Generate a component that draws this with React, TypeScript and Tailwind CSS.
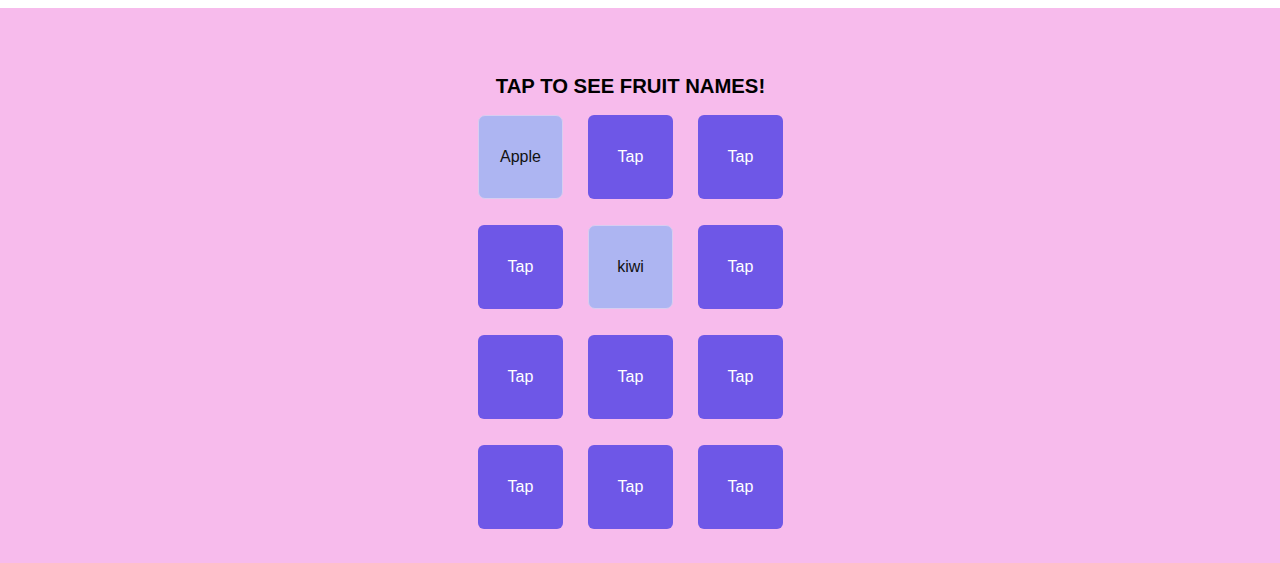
import { useState } from 'react';

const fruits = [
  'Apple', 'Banana', 'Cherry',
  'Grape', 'kiwi', 'Mango',
  'Orange', 'Pear', 'Plum',
  'Peach', 'Lemon', 'Melon',
];

const Card = ({ name, open, onTap }: { name: string; open: boolean; onTap: () => void }) => (
  <button
    onClick={onTap}
    className={
      open
        ? 'w-[85px] h-[84px] rounded-[7px] bg-[#adb5f2] border border-[#d8cdf0] text-[16px] text-[#111] flex items-center justify-center'
        : 'w-[85px] h-[84px] rounded-[6px] bg-[#6e57e7] text-[16px] text-white flex items-center justify-center'
    }
  >
    {open ? name : 'Tap'}
  </button>
);

export default function App() {
  const [opened, setOpened] = useState<number[]>([0, 4]);

  const toggle = (i: number) =>
    setOpened((prev) => (prev.includes(i) ? prev.filter((x) => x !== i) : [...prev, i]));

  return (
    <div className="mt-[8px] min-h-[555px] bg-[#f7bbec] pr-[19px] font-['Liberation_Sans',Arial,sans-serif]">
      <div className="flex flex-col items-center pt-[66px]">
        <h2 className="text-[20.3px] leading-[24px] font-bold text-black">TAP TO SEE FRUIT NAMES!</h2>
        <div className="mt-[17px] grid grid-cols-[repeat(3,85px)] gap-x-[25px] gap-y-[26px]">
          {fruits.map((f, i) => (
            <Card key={i} name={f} open={opened.includes(i)} onTap={() => toggle(i)} />
          ))}
        </div>
      </div>
    </div>
  );
}
